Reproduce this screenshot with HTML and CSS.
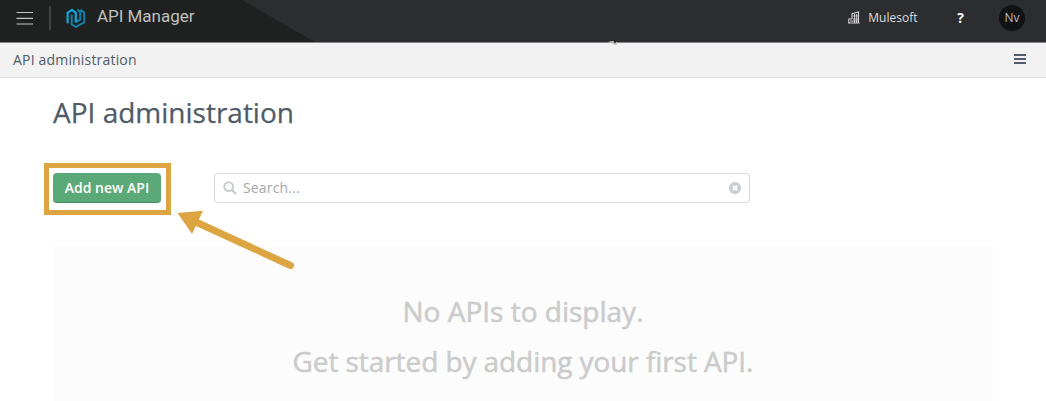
FILE: index.html
```html
<!DOCTYPE html>
<html lang="en">
<head>
<meta charset="utf-8">
<title>API Manager</title>
<link rel="stylesheet" href="styles.css">
</head>
<body>
<header class="topbar">
  <svg class="menu" width="18" height="14" viewBox="0 0 18 14"><path d="M.5 1.5h16.5M.5 7.3h16.5M.5 13h16.5" stroke="#c3c4c3" stroke-width="1.2"/></svg>
  <span class="divider"></span>
  <svg class="logo" width="20" height="21" viewBox="0 0 20 21" fill="none" stroke-width="2.2">
    <path d="M11.3 1.6L14.2 4.2V11.6L9.8 14M14.4 1.8L18.2 4.6V14.4L9.9 18.9L5.7 16.4V6.6" stroke="#147fa9" stroke-width="2"/>
    <path d="M1.6 15.2V4.8L6 1.9L9.8 4.8V14.4" stroke="#13a5d8"/>
  </svg>
  <span class="brand">API Manager</span>
  <div class="account">
    <svg class="building" width="12" height="13" viewBox="0 0 12 13" fill="none" stroke="#d5d5d6" stroke-width="1.1">
      <path d="M.8 12V8H4M4 8V2.6L10.5 1V12M0 12H11.5"/>
      <path d="M2 10h8M5 8h5M5 5h5M6.5 3v9M8.6 3v9" stroke-width=".9"/>
    </svg>
    <span class="org">Mulesoft</span>
    <span class="help">?</span>
    <span class="avatar">Nv</span>
  </div>
  <svg class="cursor" width="10" height="5" viewBox="0 0 10 5"><path d="M0 1L4 0L9 1L9 3L7 4L5 3Z" fill="#bdbdbd"/><path d="M6 0h2v1.8h-2z" fill="#222"/></svg>
</header>
<nav class="crumbs">
  <span class="crumb">API administration</span>
  <svg width="12" height="10" viewBox="0 0 12 10"><path d="M0 1h12M0 5h12M0 9h12" stroke="#525e6b" stroke-width="2"/></svg>
</nav>
<main class="content">
  <h1 class="title">API administration</h1>
  <div class="tools">
    <button class="add">Add new API</button>
    <div class="search">
      <svg width="14" height="14" viewBox="0 0 14 14" fill="none" stroke="#c8ccd1"><circle cx="5.7" cy="5.6" r="4.4" stroke-width="2"/><path d="M9 9l3.3 3.2" stroke-width="2.3" stroke-linecap="round"/></svg>
      <span class="placeholder">Search...</span>
      <svg width="12" height="12" viewBox="0 0 12 12"><circle cx="6" cy="6" r="6" fill="#c8ccd1"/><path d="M3.8 3.8l4.4 4.4M8.2 3.8L3.8 8.2" stroke="#fff" stroke-width="2"/></svg>
    </div>
  </div>
  <section class="empty">
    <p class="none">No APIs to display.</p>
    <p class="start">Get started by adding your first API.</p>
  </section>
</main>
<div class="highlight"></div>
<svg class="arrow" width="120" height="64" viewBox="0 0 120 64"><path d="M21 17L113.5 59.5" stroke="#dda542" stroke-width="7" stroke-linecap="round"/><path d="M.5 7L26 4.7L15 28Z" fill="#dda542"/></svg>
</body>
</html>
```
FILE: styles.css
```css
* { box-sizing: border-box; }
body {
  margin: 0;
  height: 401px;
  overflow: hidden;
  position: relative;
  background: #fff;
  color: #4f5b67;
  font-family: "Open Sans", "Noto Sans", sans-serif;
  font-size: 14px;
}
svg { display: block; flex: none; }
.topbar {
  position: relative;
  display: flex;
  align-items: flex-start;
  height: 43px;
  border-bottom: 1px solid #858589;
  background: #2c2d2f;
  padding-left: 16px;
}
.topbar::before {
  content: "";
  position: absolute;
  inset: 0 auto 0 0;
  width: 315px;
  background: #1f2120;
  clip-path: polygon(0 0, 242px 0, 315px 42px, 0 42px);
}
.topbar > * { position: relative; }
.topbar .menu { margin-top: 11px; }
.divider { width: 2px; height: 24px; margin: 6px 0 0 15px; background: #434544; }
.logo { margin: 8px 0 0 15px; }
.brand {
  margin: 4px 0 0 11px;
  color: #bfc0bf;
  font-family: Roboto, sans-serif;
  font-weight: 400;
  font-size: 17px;
  line-height: 24px;
  letter-spacing: -.03px;
}
.account { display: flex; align-items: center; height: 35px; margin-left: auto; padding-right: 21px; color: #dedede; }
.org { width: 50px; margin-left: 8px; font-size: 12px; white-space: nowrap; }
.help { margin-left: 39px; color: #fff; font-size: 14px; font-weight: 700; }
.avatar {
  width: 26px; height: 26px; margin-left: 35px;
  border-radius: 50%;
  background: #111213;
  color: #bbb;
  font-size: 12px;
  line-height: 25px;
  text-align: center;
}
.topbar > .cursor { position: absolute; left: 608px; top: 41px; }
.crumbs {
  display: flex;
  align-items: center;
  justify-content: space-between;
  height: 35px;
  padding: 0 20px 2px 13px;
  background: #f2f2f2;
  border-bottom: 1px solid #e1e1e1;
}
.crumb { letter-spacing: .18px; }
.content { padding: 13px 53px 0; }
.title { margin: 0; font-size: 28px; line-height: 42px; font-weight: 400; -webkit-text-stroke: .25px; }
.tools { display: flex; align-items: center; gap: 53px; margin-top: 40px; }
.add {
  width: 108px; height: 30px; padding: 0 0 1px;
  border: 0; border-bottom: 1px solid #438d5f; border-radius: 4px;
  background: #5ba976;
  color: #fff;
  font: 600 14px "Open Sans", sans-serif;
}
.search {
  display: flex;
  align-items: center;
  width: 536px; height: 30px;
  padding: 0 8px;
  border: 1px solid #d8d9da;
  border-radius: 4px;
}
.placeholder { flex: 1; margin-left: 6px; padding-bottom: 2px; color: #a4a7aa; letter-spacing: .15px; }
.empty { height: 160px; margin-top: 43px; padding-top: 40px; background: #fcfcfc; color: #cbcbcb; text-align: center; }
.empty p { margin: 0; font-size: 28px; line-height: 50px; -webkit-text-stroke: .5px; }
.start { letter-spacing: -.08px; }
.highlight { position: absolute; left: 44px; top: 163px; width: 127px; height: 52px; border: 5px solid #dda542; }
.arrow { position: absolute; left: 177px; top: 206px; }
```
